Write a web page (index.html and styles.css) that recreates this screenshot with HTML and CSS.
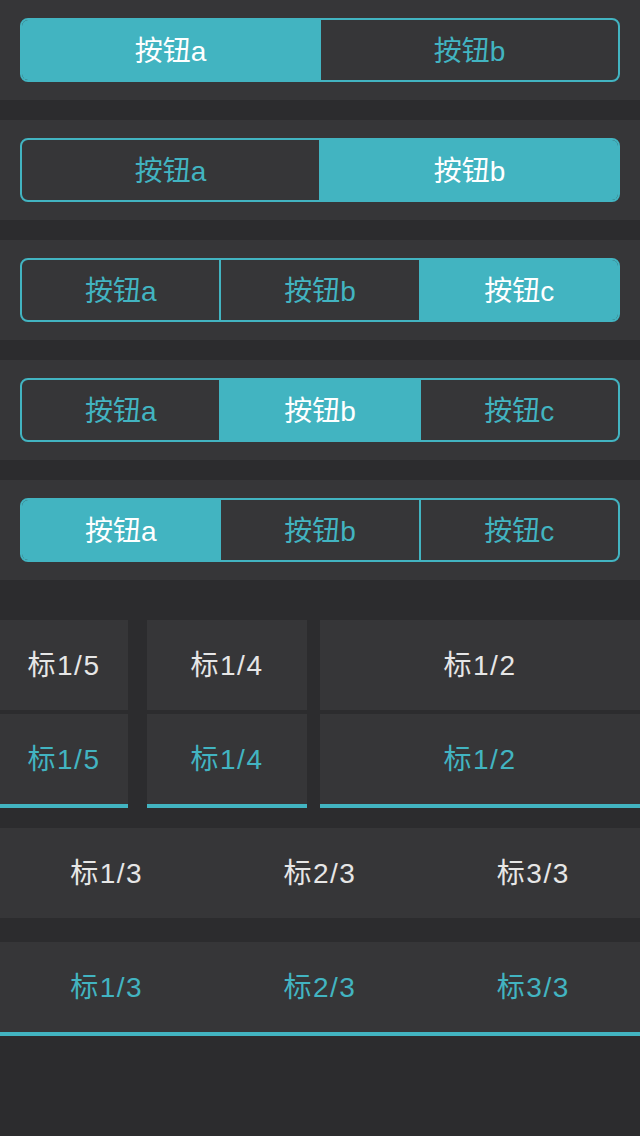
FILE: index.html
```html
<!DOCTYPE html>
<html lang="zh">
<head>
<meta charset="utf-8">
<link rel="stylesheet" href="styles.css">
</head>
<body>
  <div class="panel">
    <div class="seg">
      <div class="seg-item active">按钮a</div>
      <div class="seg-item">按钮b</div>
    </div>
  </div>
  <div class="panel">
    <div class="seg">
      <div class="seg-item">按钮a</div>
      <div class="seg-item active">按钮b</div>
    </div>
  </div>
  <div class="panel">
    <div class="seg">
      <div class="seg-item">按钮a</div>
      <div class="seg-item">按钮b</div>
      <div class="seg-item active">按钮c</div>
    </div>
  </div>
  <div class="panel">
    <div class="seg">
      <div class="seg-item">按钮a</div>
      <div class="seg-item active">按钮b</div>
      <div class="seg-item">按钮c</div>
    </div>
  </div>
  <div class="panel">
    <div class="seg">
      <div class="seg-item active">按钮a</div>
      <div class="seg-item">按钮b</div>
      <div class="seg-item">按钮c</div>
    </div>
  </div>

  <div class="tabs-mixed">
    <div class="tab w5">标1/5</div>
    <div class="tab w4">标1/4</div>
    <div class="tab w2">标1/2</div>
  </div>
  <div class="tabs-mixed second">
    <div class="tab w5 on">标1/5</div>
    <div class="tab w4 on">标1/4</div>
    <div class="tab w2 on">标1/2</div>
  </div>

  <div class="tabs-thirds">
    <div class="tab third">标1/3</div>
    <div class="tab third">标2/3</div>
    <div class="tab third">标3/3</div>
  </div>
  <div class="tabs-thirds underlined">
    <div class="tab third teal">标1/3</div>
    <div class="tab third teal">标2/3</div>
    <div class="tab third teal">标3/3</div>
  </div>
</body>
</html>
```

FILE: styles.css
```css
* {
  box-sizing: border-box;
}

body {
  margin: 0;
  background: #2c2c2e;
  font-family: "Liberation Sans", "Noto Sans CJK SC", sans-serif;
  font-size: 28px;
  line-height: 1;
}

.panel {
  height: 100px;
  padding: 18px 20px;
  margin-bottom: 20px;
  background: #363638;
}

.seg {
  display: flex;
  height: 64px;
  border: 2px solid #42b4c1;
  border-radius: 8px;
  overflow: hidden;
}

.seg-item {
  flex: 1;
  display: flex;
  align-items: center;
  justify-content: center;
  padding-top: 4px;
  color: #42b4c1;
}

.seg-item + .seg-item {
  border-left: 2px solid #42b4c1;
}

.seg-item.active {
  background: #42b4c1;
  color: #ffffff;
}

.tabs-mixed {
  display: flex;
  margin-top: 40px;
}

.tabs-mixed.second {
  margin-top: 4px;
}

.tab {
  display: flex;
  align-items: center;
  justify-content: center;
  height: 90px;
  padding-top: 2px;
  background: #363638;
  color: #e6e6e6;
  letter-spacing: 1.5px;
}

.w5 {
  width: 128px;
  margin-right: 19px;
}

.w4 {
  width: 160px;
  margin-right: 13px;
}

.w2 {
  width: 320px;
}

.tab.on {
  height: 94px;
  border-bottom: 4px solid #42b4c1;
  color: #42b4c1;
}

.tabs-thirds {
  display: flex;
  margin-top: 20px;
  background: #363638;
}

.tabs-thirds.underlined {
  margin-top: 24px;
  border-bottom: 4px solid #42b4c1;
}

.third {
  flex: 1;
}

.tab.teal {
  color: #42b4c1;
}
```
